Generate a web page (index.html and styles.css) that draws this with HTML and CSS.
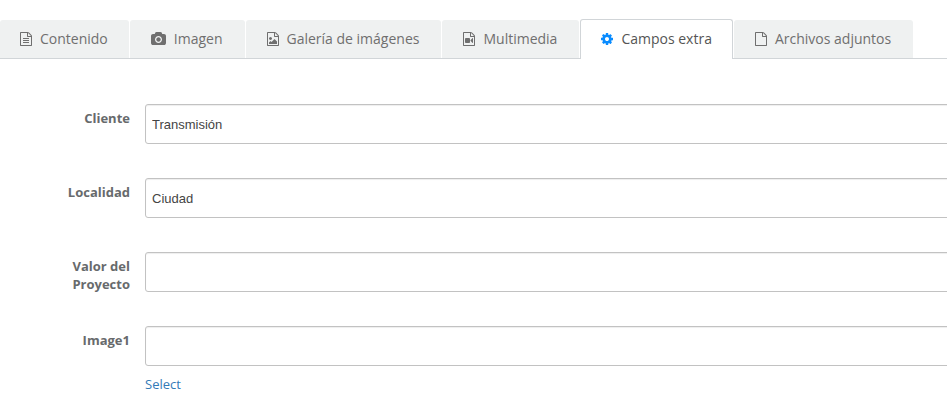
FILE: index.html
```html
<!DOCTYPE html>
<html lang="es">
   <head>
      <meta charset="utf-8">
      <title>Campos extra</title>
      <link rel="stylesheet" href="styles.css">
   </head>
   <body>

   <svg class="sprite" aria-hidden="true">
      <symbol id="file" viewBox="0 0 1536 1792">
         <path d="M1468 380q28 28 48 76t20 88v1152q0 40-28 68t-68 28h-1344q-40 0-68-28t-28-68v-1600q0-40 28-68t68-28h896q40 0 88 20t76 48zm-444-244v376h376q-10-29-22-41l-313-313q-12-12-41-22zm384 1528v-1024h-416q-40 0-68-28t-28-68v-416h-768v1536h1280z"/>
      </symbol>
   </svg>

   <nav class="tabs">
      <a class="tab" href="#contenido">
         <svg class="icon" viewBox="0 0 1536 1792"><use href="#file" width="1536" height="1792"/><path d="M384 800q0-14 9-23t23-9h704q14 0 23 9t9 23v64q0 14-9 23t-23 9h-704q-14 0-23-9t-9-23zm0 256q0-14 9-23t23-9h704q14 0 23 9t9 23v64q0 14-9 23t-23 9h-704q-14 0-23-9t-9-23zm0 256q0-14 9-23t23-9h704q14 0 23 9t9 23v64q0 14-9 23t-23 9h-704q-14 0-23-9t-9-23z"/></svg>
         Contenido
      </a>
      <a class="tab" href="#imagen">
         <svg class="icon icon-wide" viewBox="0 0 1920 1792"><path d="M960 672q119 0 203.500 84.500t84.500 203.500-84.500 203.500-203.500 84.500-203.500-84.500-84.500-203.500 84.500-203.500 203.500-84.500zm704-416q106 0 181 75t75 181v896q0 106-75 181t-181 75h-1408q-106 0-181-75t-75-181v-896q0-106 75-181t181-75h224l51-136q19-49 69.500-84.500t103.500-35.500h512q53 0 103.500 35.500t69.500 84.500l51 136h224zm-704 1152q185 0 316.500-131.500t131.500-316.500-131.500-316.500-316.500-131.500-316.500 131.500-131.500 316.500 131.500 316.500 316.500 131.500z"/></svg>
         Imagen
      </a>
      <a class="tab" href="#galeria">
         <svg class="icon" viewBox="0 0 1536 1792"><use href="#file" width="1536" height="1792"/><path d="M1280 1216v320h-1024v-192l192-192 128 128 384-384zm-832-192q-80 0-136-56t-56-136 56-136 136-56 136 56 56 136-56 136-136 56z"/></svg>
         Galería de imágenes
      </a>
      <a class="tab" href="#multimedia">
         <svg class="icon" viewBox="0 0 1536 1792"><use href="#file" width="1536" height="1792"/><path d="M768 768q52 0 90 38t38 90v384q0 52-38 90t-90 38h-384q-52 0-90-38t-38-90v-384q0-52 38-90t90-38h384zm492 2q20 8 20 30v576q0 22-20 30-8 2-12 2-14 0-23-9l-265-266v-90l265-266q9-9 23-9 4 0 12 2z"/></svg>
         Multimedia
      </a>
      <a class="tab active" href="#extra" aria-current="page">
         <svg class="icon" viewBox="0 0 1536 1792"><path d="M1024 896q0-106-75-181t-181-75-181 75-75 181 75 181 181 75 181-75 75-181zm512-109v222q0 12-8 23t-20 13l-185 28q-19 54-39 91 35 50 107 138 10 12 10 25t-9 23q-27 37-99 108t-94 71q-12 0-26-9l-138-108q-44 23-91 38-16 136-29 186-7 28-36 28h-222q-14 0-24.500-8.500t-11.500-21.500l-28-184q-49-16-90-37l-141 107q-10 9-25 9-14 0-25-11-126-114-165-168-7-10-7-23 0-12 8-23 15-21 51-66.500t54-70.500q-27-50-41-99l-183-27q-13-2-21-12.500t-8-23.500v-222q0-12 8-23t19-13l186-28q14-46 39-92-40-57-107-138-10-12-10-24 0-10 9-23 26-36 98.500-107.500t94.500-71.500q13 0 26 10l138 107q44-23 91-38 16-136 29-186 7-28 36-28h222q14 0 24.500 8.500t11.500 21.500l28 184q49 16 90 37l142-107q9-9 24-9 13 0 25 10 129 119 165 170 7 8 7 22 0 12-8 23-15 21-51 66.500t-54 70.500q26 50 41 98l183 28q13 2 21 12.500t8 23.500z"/></svg>
         Campos extra
      </a>
      <a class="tab" href="#adjuntos">
         <svg class="icon" viewBox="0 0 1536 1792"><use href="#file" width="1536" height="1792"/></svg>
         Archivos adjuntos
      </a>
   </nav>

   <form class="fields">
      <div class="row">
         <label for="cliente">Cliente</label>
         <input type="text" id="cliente" value="Transmisión">
      </div>
      <div class="row">
         <label for="localidad">Localidad</label>
         <input type="text" id="localidad" value="Ciudad">
      </div>
      <div class="row">
         <label for="valor">Valor del Proyecto</label>
         <input type="text" id="valor">
      </div>
      <div class="row">
         <label for="image1">Image1</label>
         <div class="picker">
            <input type="text" id="image1">
            <a href="#select">Select</a>
         </div>
      </div>
   </form>

   </body>
</html>
```

FILE: styles.css
```css
* { box-sizing: border-box; }

body {
  margin: 0;
  background: #fff;
  color: #676a6c;
  font-family: "Open Sans", sans-serif;
  font-size: 13px;
  line-height: 18px;
  overflow-x: hidden;
}

.sprite { display: none; }

/* tabs */
.tabs {
  display: flex;
  align-items: flex-end;
  gap: 1px;
  padding-top: 19px;
  border-bottom: 1px solid #d1d5d8;
}
.tab {
  display: flex;
  align-items: center;
  gap: 8px;
  height: 38px;
  padding: 0 22px 0 21px;
  border-radius: 3px 3px 0 0;
  background: #eff1f1;
  color: #6f6f6f;
  font-size: 14px;
  text-decoration: none;
  white-space: nowrap;
}
.tab:first-child { padding: 0 21px 0 20px; }
.tab.active {
  height: 40px;
  margin-bottom: -1px;
  padding: 0 20px 2px;
  border: 1px solid #d1d5d8;
  border-bottom: 0;
  background: #fff;
  color: #555;
}
.icon {
  width: 12px;
  height: 14px;
  fill: currentColor;
}
.icon-wide { width: 15px; }
.active .icon { fill: #0a8cff; }

/* form, the fields run off the right edge */
.fields {
  display: grid;
  gap: 34px;
  margin-right: -20px;
  padding: 45px 0 10px 45px;
}
.row {
  display: grid;
  grid-template-columns: 85px 1fr;
  column-gap: 15px;
  align-items: start;
}
.row label {
  height: 40px;
  padding-top: 5px;
  font-weight: bold;
  text-align: right;
}
.row input {
  width: 100%;
  height: 40px;
  padding: 0 6px;
  border: 1px solid #c2c2c2;
  border-radius: 3px;
  box-shadow: inset 0 1px 1px #eee;
  background: #fff;
  color: #444;
  font-family: "Liberation Sans", sans-serif;
  font-size: 13px;
}
.picker {
  display: grid;
  justify-items: start;
  gap: 9px;
}
.picker a {
  color: #337ab7;
  text-decoration: none;
}
```
